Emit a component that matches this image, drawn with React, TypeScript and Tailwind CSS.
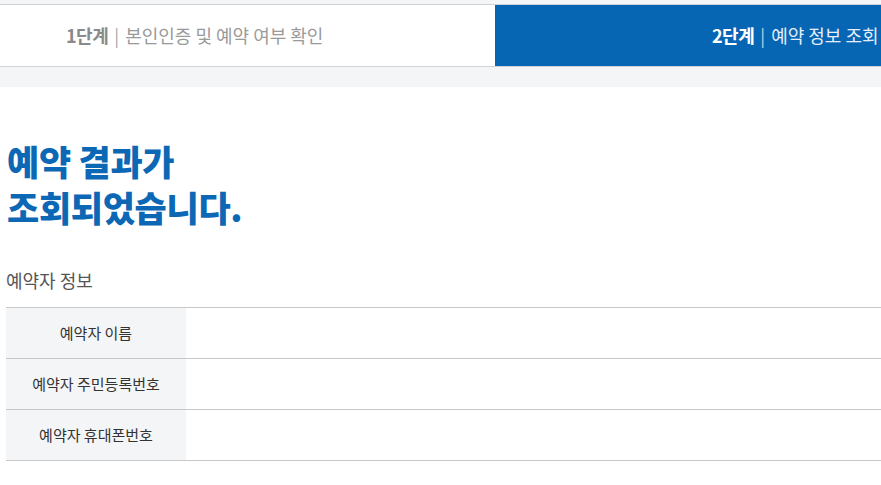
const ROWS = ['예약자 이름', '예약자 주민등록번호', '예약자 휴대폰번호'];

export default function App() {
  return (
    <div
      className="min-h-[485px] bg-white overflow-hidden"
      style={{ fontFamily: '"Noto Sans CJK KR", "Noto Sans", sans-serif' }}
    >
      <div className="h-[5px] bg-[#f4f5f7] border-b border-[#cfd2d8]" />
      <div className="flex h-[62px] border-b border-[#cfd2d8]">
        <div className="w-[495px] shrink-0 flex items-center pl-[66px] whitespace-nowrap text-[18px]">
          <span className="font-bold text-[#8a8a8a] tracking-[-0.5px]">1단계</span>
          <span className="text-[#aaa] mx-[6px]">|</span>
          <span className="text-[#9a9a9a]">본인인증 및 예약 여부 확인</span>
        </div>
        <div className="flex-1 flex items-center pl-[217px] bg-[#0766b4] whitespace-nowrap overflow-hidden text-[18px]">
          <span className="font-bold text-white tracking-[-0.5px]">2단계</span>
          <span className="text-[#b8d2ea] mx-[6px]">|</span>
          <span className="text-[#e4eef8]">예약 정보 조회</span>
        </div>
      </div>
      <div className="h-[20px] bg-[#f4f5f7]" />

      <div className="pl-[6px]">
        <h1 className="mt-[51px] pl-[1px] text-[35px] leading-[46px] font-black text-[#0c68b5] tracking-[-0.3px]">
          <span className="block">예약 결과가</span>
          <span className="block">조회되었습니다.</span>
        </h1>

        <h2 className="mt-[37px] text-[18px] text-[#555]">예약자 정보</h2>

        <div className="mt-[13px] border-t border-[#c8c8c8]">
          {ROWS.map(label => (
            <div key={label} className="flex h-[51px] border-b border-[#c8c8c8]">
              <div className="w-[180px] shrink-0 bg-[#f4f5f7] flex items-center justify-center text-[15px] text-[#333]">
                {label}
              </div>
              <div className="flex-1" />
            </div>
          ))}
        </div>
      </div>
    </div>
  );
}
